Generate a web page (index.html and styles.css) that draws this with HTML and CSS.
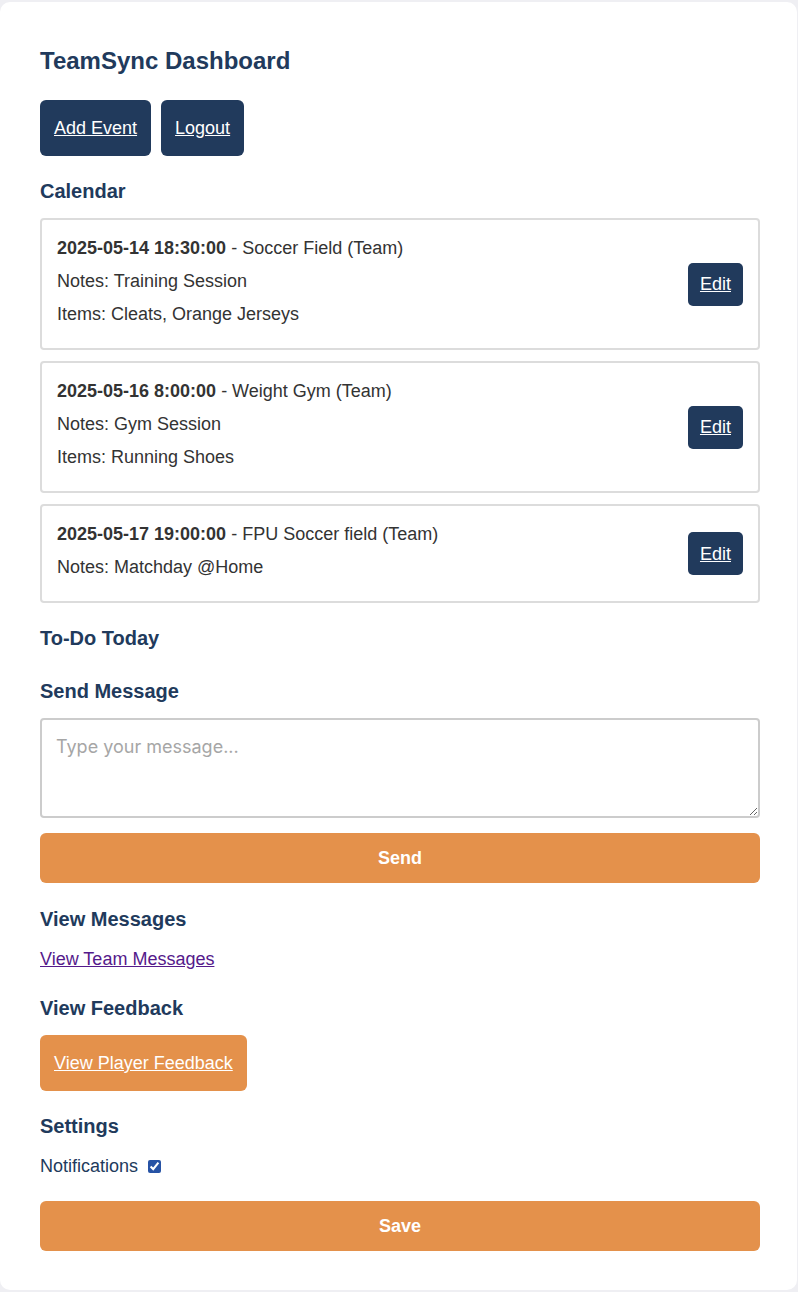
FILE: index.html
```html
<!DOCTYPE html>
<html lang="en">
<head>
<meta charset="utf-8">
<title>TeamSync Dashboard</title>
<link rel="stylesheet" href="styles.css">
</head>
<body>
<main class="dashboard">
  <h1 class="title">TeamSync Dashboard</h1>
  <nav class="nav">
    <a href="#" class="btn btn-navy">Add Event</a>
    <a href="#" class="btn btn-navy">Logout</a>
  </nav>

  <h2 class="section-title calendar-title">Calendar</h2>
  <div class="events">
    <div class="event">
      <div class="event-info">
        <p class="line"><strong>2025-05-14 18:30:00</strong> - Soccer Field (Team)</p>
        <p class="line">Notes: Training Session</p>
        <p class="line">Items: Cleats, Orange Jerseys</p>
      </div>
      <a href="#" class="edit">Edit</a>
    </div>
    <div class="event">
      <div class="event-info">
        <p class="line"><strong>2025-05-16 8:00:00</strong> - Weight Gym (Team)</p>
        <p class="line">Notes: Gym Session</p>
        <p class="line">Items: Running Shoes</p>
      </div>
      <a href="#" class="edit">Edit</a>
    </div>
    <div class="event">
      <div class="event-info">
        <p class="line"><strong>2025-05-17 19:00:00</strong> - FPU Soccer field (Team)</p>
        <p class="line">Notes: Matchday @Home</p>
      </div>
      <a href="#" class="edit">Edit</a>
    </div>
  </div>

  <h2 class="section-title todo-title">To-Do Today</h2>

  <h2 class="section-title message-title">Send Message</h2>
  <textarea class="message" placeholder="Type your message..."></textarea>
  <button class="btn-wide send">Send</button>

  <h2 class="section-title view-title">View Messages</h2>
  <a href="#" class="team-link">View Team Messages</a>

  <h2 class="section-title feedback-title">View Feedback</h2>
  <div class="feedback-row">
    <a href="#" class="btn btn-orange">View Player Feedback</a>
  </div>

  <h2 class="section-title settings-title">Settings</h2>
  <label class="setting">Notifications <input type="checkbox" class="check" checked></label>
  <button class="btn-wide save">Save</button>
</main>
</body>
</html>
```

FILE: styles.css
```css
* { box-sizing: border-box; }

html, body {
  margin: 0;
  padding: 0;
}

body {
  background: #efeff3;
  padding-top: 2px;
  font-family: "Liberation Sans", Arial, Helvetica, sans-serif;
  font-size: 18px;
  color: #333;
}

.dashboard {
  width: 797px;
  height: 1288px;
  background: #fff;
  border-radius: 10px;
  padding: 45px 37px 0 40px;
  display: flex;
  flex-direction: column;
  align-items: stretch;
}

.title {
  margin: 0;
  font-size: 24px;
  line-height: 28px;
  font-weight: bold;
  color: #213a5c;
}

.nav {
  display: flex;
  gap: 10px;
  margin-top: 25px;
}

.btn {
  display: inline-flex;
  align-items: center;
  justify-content: center;
  height: 56px;
  padding: 0 14px;
  border-radius: 6px;
  color: #fff;
  font-size: 18px;
  text-decoration: underline;
  line-height: 20px;
}

.btn-navy { background: #213a5c; }
.btn-orange { background: #e4914b; }

.section-title {
  margin: 0;
  font-size: 20px;
  line-height: 24px;
  font-weight: bold;
  color: #213a5c;
}

.calendar-title { margin-top: 23px; }

.events {
  display: flex;
  flex-direction: column;
  gap: 11px;
  margin-top: 15px;
}

.event {
  display: flex;
  align-items: center;
  justify-content: space-between;
  border: 2px solid #dcdcdc;
  border-radius: 4px;
  padding: 16px 15px;
}

.event-info {
  display: flex;
  flex-direction: column;
  gap: 9px;
  padding-bottom: 6px;
}

.line {
  margin: 0;
  line-height: 24px;
  color: #333;
}

.line strong { font-weight: bold; }

.edit {
  display: inline-flex;
  align-items: center;
  justify-content: center;
  height: 43px;
  padding: 0 12px;
  background: #213a5c;
  color: #fff;
  border-radius: 5px;
  text-decoration: underline;
  line-height: 20px;
}

.todo-title { margin-top: 23px; }
.message-title { margin-top: 29px; }

.message {
  display: block;
  margin-top: 15px;
  height: 100px;
  border: 2px solid #cccccc;
  border-radius: 4px;
  padding: 16px 14px;
  font-family: Inter, "Liberation Sans", Arial, sans-serif;
  font-size: 18px;
  color: #333;
  resize: vertical;
}

.message::placeholder { color: #a6a6a6; }

.btn-wide {
  display: block;
  height: 50px;
  border: none;
  border-radius: 6px;
  background: #e4914b;
  color: #fff;
  font-family: "Liberation Sans", Arial, sans-serif;
  font-size: 18px;
  font-weight: bold;
}

.send { margin-top: 15px; }

.view-title { margin-top: 24px; }

.team-link {
  display: block;
  align-self: flex-start;
  margin-top: 18px;
  line-height: 20px;
  color: #551a8b;
  text-decoration: underline;
}

.feedback-title { margin-top: 27px; }

.feedback-row {
  display: flex;
  margin-top: 15px;
}

.settings-title { margin-top: 23px; }

.setting {
  display: flex;
  align-items: center;
  margin-top: 18px;
  line-height: 20px;
  color: #213a5c;
}

.check {
  width: 13px;
  height: 13px;
  margin: 0 0 0 10px;
  accent-color: #2753a5;
}

.save { margin-top: 25px; }
```
